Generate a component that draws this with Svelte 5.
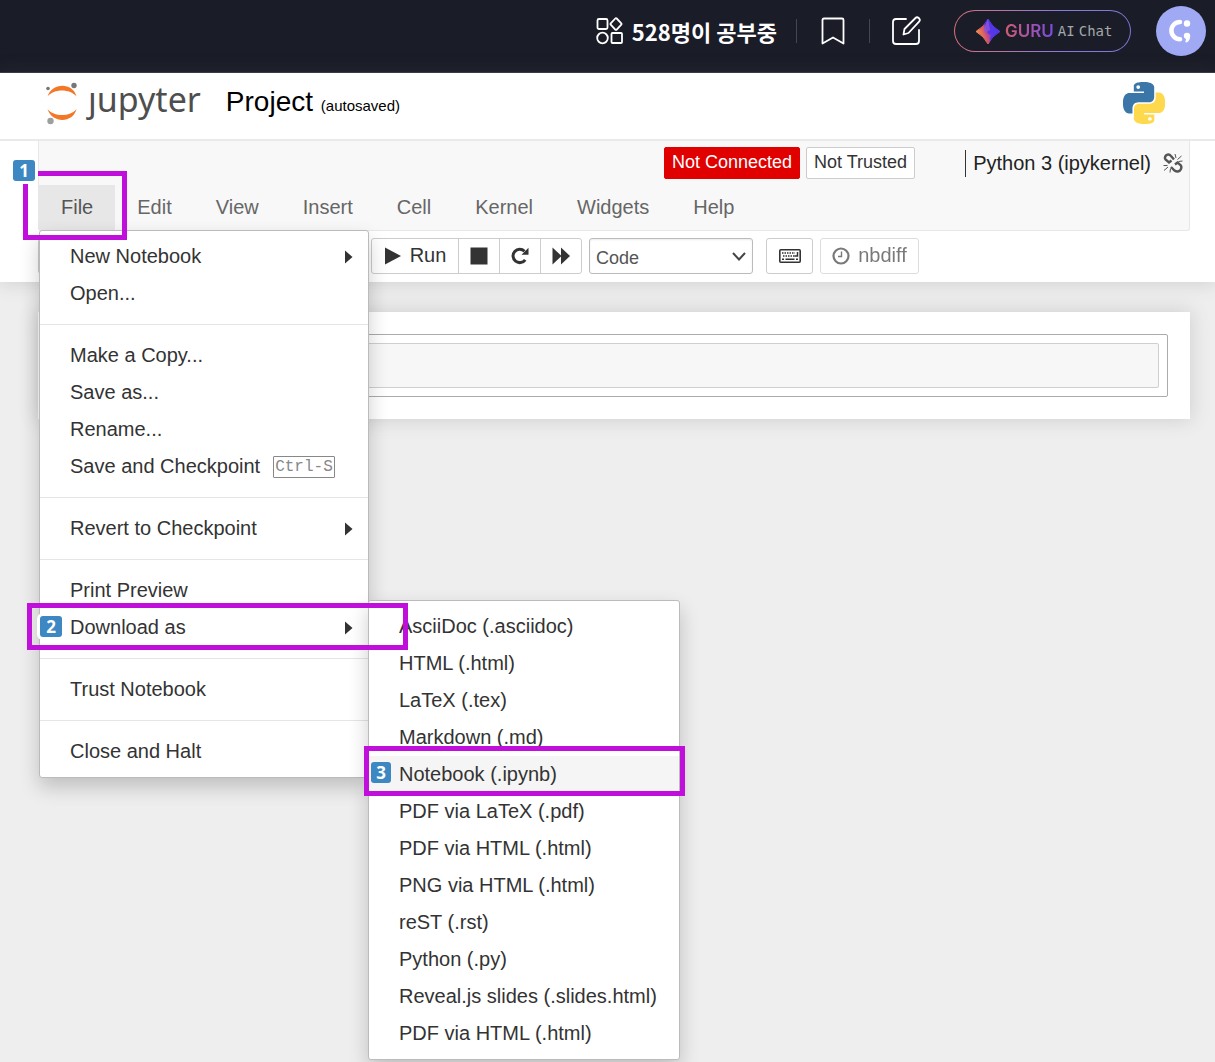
<script>
  let cellType = 'Code';
  let source = '';

  const menus = ['File', 'Edit', 'View', 'Insert', 'Cell', 'Kernel', 'Widgets', 'Help'];

  const fileMenu = [
    [{ label: 'New Notebook', sub: true }, { label: 'Open...' }],
    [
      { label: 'Make a Copy...' },
      { label: 'Save as...' },
      { label: 'Rename...' },
      { label: 'Save and Checkpoint', key: 'Ctrl-S' }
    ],
    [{ label: 'Revert to Checkpoint', sub: true }],
    [{ label: 'Print Preview' }, { label: 'Download as', sub: true, step: 2 }],
    [{ label: 'Trust Notebook' }],
    [{ label: 'Close and Halt' }]
  ];

  const formats = [
    'AsciiDoc (.asciidoc)',
    'HTML (.html)',
    'LaTeX (.tex)',
    'Markdown (.md)',
    'Notebook (.ipynb)',
    'PDF via LaTeX (.pdf)',
    'PDF via HTML (.html)',
    'PNG via HTML (.html)',
    'reST (.rst)',
    'Python (.py)',
    'Reveal.js slides (.slides.html)',
    'PDF via HTML (.html)'
  ];

  // edit buttons, icons on a 20x20 grid
  const editGroups = [
    [{ name: 'Save', d: 'M3 3h11l3 3v11H3zM6 3v5h7V3M6 17v-6h8v6' }],
    [{ name: 'Insert cell below', d: 'M10 3v14M3 10h14' }],
    [
      { name: 'Cut', d: 'M4 4l11 11M4 16L15 5' },
      { name: 'Copy', d: 'M3 3h9v9H3zM8 12v5h9V8h-5' },
      { name: 'Paste', d: 'M4 4h12v13H4zM8 2h4v4H8z' }
    ],
    [
      { name: 'Move up', d: 'M10 17V3M4 9l6-6 6 6' },
      { name: 'Move down', d: 'M10 3v14M4 11l6 6 6-6' }
    ]
  ];
</script>

<div class="page">
  <header class="topbar">
    <a class="studying" href="#members">
      <svg width="28" height="28" viewBox="0 0 28 28" fill="none" stroke="#fff" stroke-width="1.8">
        <rect x="1.5" y="2" width="10" height="10" rx="1.5" />
        <path d="M20 1.2a1 1 0 0 1 .7.3l4.6 4.8a1 1 0 0 1 0 1.4l-4.6 4.8a1 1 0 0 1-1.4 0L14.700 7.700a1 1 0 0 1 0-1.400L19.300 1.500a1 1 0 0 1 .7-.3z" />
        <circle cx="6.5" cy="21" r="5.3" />
        <rect x="15.5" y="16" width="10.5" height="10" rx="1" />
      </svg>
      <span>528명이 공부중</span>
    </a>
    <span class="sep"></span>
    <button class="plain bookmark" aria-label="Bookmark">
      <svg width="24" height="28" viewBox="0 0 24 28" fill="none" stroke="#fff" stroke-width="1.8" stroke-linejoin="round">
        <path d="M3 1.5h18q1.5 0 1.5 1.5v23.5L12 20.5 1.5 26.5V3Q1.5 1.5 3 1.5z" />
      </svg>
    </button>
    <span class="sep"></span>
    <button class="plain write" aria-label="Write">
      <svg width="29" height="30" viewBox="0 0 29 30" fill="none" stroke="#fff" stroke-width="1.8" stroke-linejoin="round" stroke-linecap="round">
        <path d="M14 3H4Q1 3 1 6v19q0 3 3 3h20q3 0 3-3V14" />
        <path d="M11.5 18.5l1-5.5L23.5 2q1.500-1.500 3.200 0l.4.4q1.500 1.700 0 3.200L16.500 17z" />
      </svg>
    </button>
    <a class="guru" href="#chat">
      <svg width="26" height="27" viewBox="0 0 26 27">
        <defs>
          <linearGradient id="spark" x1="0" y1="0.7" x2="1" y2="0.3">
            <stop offset="0.1" stop-color="#f58a4c" />
            <stop offset="0.4" stop-color="#d0526e" />
            <stop offset="0.5" stop-color="#5b35e8" />
            <stop offset="1" stop-color="#4a3ae8" />
          </linearGradient>
        </defs>
        <path d="M13 1Q17 9 25 13.5Q17 18 13 26Q9 18 1 13.5Q9 9 13 1z" fill="url(#spark)" stroke="url(#spark)" stroke-linejoin="round" />
        <path d="M13 1L9 10l1 5 5-3z" fill="#8a55d8" opacity=".8" />
        <path d="M13 26L10 14l6 3z" fill="#c04f8a" opacity=".6" />
      </svg>
      <b>GURU</b>
      <span>AI</span>
      <span>Chat</span>
    </a>
    <a class="avatar" href="#profile" aria-label="Profile">
      <svg width="50" height="50" viewBox="0 0 50 50">
        <circle cx="25" cy="25" r="25" fill="#a0aaf4" />
        <path d="M24 16a8.600 8.600 0 0 0 0 17.200" fill="none" stroke="#fff" stroke-width="4.5" stroke-linecap="round" />
        <circle cx="31" cy="17.500" r="3.200" fill="#fff" />
        <path d="M27.800 30a3.200 3.200 0 0 1 6.400 0c0 3-1.500 6-4 6.500-.8 0-1-.6-.7-1.200l.6-2.200A3.200 3.200 0 0 1 27.800 30z" fill="#fff" />
      </svg>
    </a>
  </header>

  <div class="notebook-header">
    <div class="title-row">
      <a class="logo" href="#home">
        <svg width="34" height="44" viewBox="0 0 34 44">
          <path d="M2.500 15.500C7 1 28 1 31.500 15.500C25 7.500 9 7.500 2.500 15.500z" fill="#f37726" />
          <path d="M2.500 28C7 42.500 28 42.500 31.500 28C25 36 9 36 2.500 28z" fill="#f37726" />
          <circle cx="3" cy="7.500" r="1.800" fill="#767677" />
          <circle cx="29" cy="4.500" r="2.700" fill="#767677" />
          <circle cx="5.500" cy="40" r="3.200" fill="#9e9e9e" />
        </svg>
        <span>ȷupyter</span>
      </a>
      <h1>Project <small>(autosaved)</small></h1>
      <svg class="python" width="42" height="42" viewBox="0 0 24 24">
        <path fill="#3a76a8" d="M14.25.18l.9.2.73.26.59.3.45.32.34.34.25.34.16.33.1.3.04.26.02.2-.01.13V8.5l-.05.63-.13.55-.21.46-.26.38-.3.31-.33.25-.35.19-.35.14-.33.1-.3.07-.26.04-.21.02H8.77l-.69.05-.59.14-.5.22-.41.27-.33.32-.27.35-.2.36-.15.37-.1.35-.07.32-.04.27-.02.21v3.06H3.17l-.21-.03-.28-.07-.32-.12-.35-.18-.36-.26-.36-.36-.35-.46-.32-.59-.28-.73-.21-.88-.14-1.05-.05-1.23.06-1.22.16-1.04.24-.87.32-.71.36-.57.4-.44.42-.33.42-.24.4-.16.36-.1.32-.05.24-.01h.16l.06.01h8.16v-.83H6.18l-.01-2.75-.02-.37.05-.34.11-.31.17-.28.25-.26.31-.23.38-.2.44-.18.51-.15.58-.12.64-.1.71-.06.77-.04.84-.02 1.27.05zm-6.3 1.98l-.23.33-.08.41.08.41.23.34.33.22.41.09.41-.09.33-.22.23-.34.08-.41-.08-.41-.23-.33-.33-.22-.41-.09-.41.09z" />
        <path fill="#ffd94d" d="M21.1 6.11l.28.06.32.12.35.18.36.27.36.35.35.47.32.59.28.73.21.88.14 1.04.05 1.23-.06 1.23-.16 1.04-.24.86-.32.71-.36.57-.4.45-.42.33-.42.24-.4.16-.36.09-.32.05-.24.02-.16-.01h-8.22v.82h5.84l.01 2.76.02.36-.05.34-.11.31-.17.29-.25.25-.31.24-.38.2-.44.17-.51.15-.58.13-.64.09-.71.07-.77.04-.84.01-1.27-.04-1.07-.14-.9-.2-.73-.25-.59-.3-.45-.33-.34-.34-.25-.34-.16-.33-.1-.3-.04-.25-.02-.2.01-.13v-5.34l.05-.64.13-.54.21-.46.26-.38.3-.32.33-.24.35-.2.35-.14.33-.1.3-.06.26-.04.21-.02.13-.01h5.84l.69-.05.59-.14.5-.21.41-.28.33-.32.27-.35.2-.36.15-.36.1-.35.07-.32.04-.28.02-.21V6.07h2.09l.14.01zm-6.47 14.25l-.23.33-.08.41.08.41.23.33.33.23.41.08.41-.08.33-.23.23-.33.08-.41-.08-.41-.23-.33-.33-.23-.41-.08-.41.08z" />
      </svg>
    </div>

    <div class="container">
      <div class="menubar">
        <div class="status">
          <span class="notice danger">Not Connected</span>
          <button class="notice">Not Trusted</button>
          <span class="kernel">Python 3 (ipykernel)</span>
          <svg width="20" height="20" viewBox="0 0 20 20" fill="none" stroke="#555">
            <path d="M8.500 7.500L6 9.500L2.500 6.500Q1 4 3.500 2Q6 .500 8 3L11 6.500M8 14L11.500 17.500Q14.500 19.500 17 17.500Q19.500 14.500 17.500 12L14.500 9.500L12 11.500" stroke-width="2.4" />
            <path d="M12 1l1 4M18.500 3l-4 3.500M19.500 8l-4 .5M.5 12.500h4M1 17.500l4-3.500M7 19.500l.5-4" stroke-width="1" />
          </svg>
        </div>

        <ul class="nav">
          {#each menus as menu, i}
            <li class:open={i === 0}>
              <a href="#{menu}">{menu}</a>
              {#if i === 0}
                <div class="dropdown">
                  {#each fileMenu as section}
                    <ul>
                      {#each section as item}
                        <li>
                          <a href="#file">
                            {item.label}
                            {#if item.key}<kbd>{item.key}</kbd>{/if}
                            {#if item.sub}
                              <svg class="caret" width="8" height="14" viewBox="0 0 8 14"><path d="M0 .5L7.500 7L0 13.500z" /></svg>
                            {/if}
                          </a>
                          {#if item.step}
                            <ul class="submenu">
                              {#each formats as format, n}
                                <li class:active={n === 4}>
                                  <a href="#download">{format}</a>
                                  {#if n === 4}
                                    <span class="mark mark-3"></span>
                                    <span class="step step-3">3</span>
                                  {/if}
                                </li>
                              {/each}
                            </ul>
                            <span class="mark mark-2"></span>
                            <span class="step step-2">{item.step}</span>
                          {/if}
                        </li>
                      {/each}
                    </ul>
                  {/each}
                </div>
                <span class="mark mark-1"></span>
                <span class="step step-1">1</span>
              {/if}
            </li>
          {/each}
        </ul>
      </div>

      <div class="toolbar">
        {#each editGroups as group}
          <div class="group">
            {#each group as b}
              <button class="btn edit" aria-label={b.name}>
                <svg width="20" height="20" viewBox="0 0 20 20" fill="none" stroke="#333" stroke-width="2"><path d={b.d} /></svg>
              </button>
            {/each}
          </div>
        {/each}
        <div class="group">
          <button class="btn run">
            <svg width="18" height="18" viewBox="0 0 18 18"><path d="M1 .5L17 9L1 17.500z" /></svg>
            Run
          </button>
          <button class="btn" aria-label="Interrupt">
            <svg width="18" height="18" viewBox="0 0 18 18"><path d="M.5.5h17v17H.5z" /></svg>
          </button>
          <button class="btn" aria-label="Restart">
            <svg width="18" height="18" viewBox="0 0 18 18">
              <path d="M14.200 12.800A6.700 6.700 0 1 1 13.500 4.200" fill="none" stroke="#333" stroke-width="3" />
              <path d="M17.500.8v7h-7z" />
            </svg>
          </button>
          <button class="btn" aria-label="Restart and run all">
            <svg width="18" height="18" viewBox="0 0 18 18"><path d="M.5.5L9 8.500V.5L18 9L9 17.500V9.500L.5 17.500z" /></svg>
          </button>
        </div>
        <div class="select">
          <select bind:value={cellType} aria-label="Cell type">
            <option>Code</option>
            <option>Markdown</option>
            <option>Raw NBConvert</option>
            <option>Heading</option>
          </select>
          <svg width="14" height="9" viewBox="0 0 14 9" fill="none" stroke="#444" stroke-width="2"><path d="M1 1l6 6.500L13 1" /></svg>
        </div>
        <button class="btn palette" aria-label="Command palette">
          <svg width="22" height="14" viewBox="0 0 22 14" fill="none" stroke="#333">
            <rect x=".8" y=".8" width="20.4" height="12.4" rx="1" stroke-width="1.6" />
            <path d="M3 4h13M4 7h12" stroke-width="1.5" stroke-dasharray="1.5 1" />
            <path d="M3 10.300h2M6.500 10.300h9M17 10.300h2M15.500 7h3V3" stroke-width="1.5" />
          </svg>
        </button>
        <button class="btn nbdiff" disabled>
          <svg width="18" height="18" viewBox="0 0 18 18" fill="none" stroke="#333">
            <circle cx="9" cy="9" r="7.5" stroke-width="2.2" />
            <path d="M9.500 4.500v5H6" stroke-width="1.4" />
          </svg>
          nbdiff
        </button>
      </div>
    </div>
  </div>

  <main>
    <div class="cell">
      <textarea rows="1" aria-label="Cell source" bind:value={source}></textarea>
    </div>
  </main>
</div>

<style>
  :global(body) {
    margin: 0;
    background: #eee;
    font-family: "Liberation Sans", Arial, sans-serif;
    font-size: 20px;
    color: #333;
  }
  .page {
    display: flow-root;
    min-height: 100vh;
  }
  ul {
    list-style: none;
    margin: 0;
    padding: 0;
  }
  a {
    color: inherit;
    text-decoration: none;
  }
  svg {
    display: block;
    flex: none;
  }
  button, select, textarea {
    font-family: inherit;
    color: inherit;
    box-sizing: border-box;
  }

  /* site bar */
  .topbar {
    display: flex;
    align-items: center;
    justify-content: flex-end;
    padding: 6px 9px 16px;
    background: #1a1c28;
    border-bottom: 1px solid #3b3947;
    color: #fff;
  }
  .studying {
    display: flex;
    align-items: center;
    gap: 8px;
    margin-right: 19px;
    font: bold 22px/32px "Noto Sans CJK KR", sans-serif;
  }
  .sep {
    width: 1px;
    height: 24px;
    background: #454650;
  }
  .plain {
    padding: 0;
    border: none;
    background: none;
  }
  .bookmark {
    margin: 0 24px;
  }
  .write {
    margin: 0 33px 0 22px;
  }
  .guru {
    display: flex;
    align-items: center;
    gap: 4px;
    box-sizing: border-box;
    width: 177px;
    height: 42px;
    padding: 0 20px;
    margin-right: 25px;
    border: 1px solid transparent;
    border-radius: 21px;
    background: linear-gradient(#1a1c28, #1a1c28) padding-box,
      linear-gradient(90deg, #d9737d, #8a79dc 60%, #8376d8) border-box;
  }
  .guru b {
    font: 600 17px/24px Inter, sans-serif;
    background: linear-gradient(90deg, #cf5c74, #7a4be0);
    -webkit-background-clip: text;
    background-clip: text;
    color: transparent;
  }
  .guru span {
    font: 14px/24px "DejaVu Sans Mono", monospace;
    color: #a3a8a8;
  }

  /* notebook header */
  .notebook-header {
    position: relative;
    z-index: 2;
    background: #fff;
    box-shadow: 0 0 18px 1px rgba(87, 87, 87, 0.2);
  }
  .title-row {
    display: flex;
    align-items: center;
    height: 66px;
    padding: 0 50px 0 45px;
    border-bottom: 2px solid #e9e9e9;
  }
  .logo {
    display: flex;
    align-items: center;
    gap: 9px;
    padding-bottom: 6px;
    font: 34px/44px "Noto Sans", sans-serif;
    color: #4e4e4e;
  }
  .logo span {
    padding-bottom: 8px;
  }
  h1 {
    margin: 0 auto 5px 25px;
    font-size: 28px;
    font-weight: normal;
    line-height: 32px;
    color: #000;
  }
  h1 small {
    font-size: 15px;
  }
  .python {
    margin-bottom: 6px;
  }
  .container {
    padding: 0 25px 0 38px;
  }
  .menubar {
    background: #f8f8f8;
    border: 1px solid #e7e7e7;
    border-top: none;
    border-radius: 0 0 3px 3px;
  }
  .status {
    display: flex;
    align-items: center;
    justify-content: flex-end;
    height: 44px;
    padding-right: 6px;
  }
  .notice {
    height: 32px;
    margin: 0 6px 0 0;
    padding: 0 7px 2px;
    box-sizing: border-box;
    border: 1px solid #ccc;
    border-radius: 2px;
    background: #fff;
    font-size: 18px;
    line-height: 28px;
  }
  .danger {
    background: #e00000;
    border-color: #e00000;
    color: #fff;
  }
  .kernel {
    margin: 0 12px 0 44px;
    padding-left: 7px;
    border-left: 1px solid #333;
    line-height: 27px;
    color: #222;
  }
  .nav {
    display: flex;
  }
  .nav > li {
    position: relative;
  }
  .nav > li > a {
    display: block;
    padding: 0 22px;
    line-height: 45px;
    color: #666;
  }
  .nav > .open > a {
    background: #e7e7e7;
    color: #555;
  }

  .dropdown, .submenu {
    position: absolute;
    z-index: 3;
    box-sizing: border-box;
    padding: 7px 0;
    background: #fff;
    border: 1px solid #bbb;
    border-radius: 3px;
    box-shadow: 0 9px 20px rgba(0, 0, 0, 0.2);
  }
  .dropdown {
    top: 100%;
    left: 0;
    width: 330px;
  }
  .submenu {
    top: -9px;
    left: 100%;
    width: 312px;
  }
  .dropdown > ul + ul {
    margin-top: 12px;
    padding-top: 12px;
    border-top: 1px solid #e5e5e5;
  }
  .dropdown li {
    position: relative;
  }
  .dropdown a {
    display: flex;
    align-items: center;
    height: 37px;
    padding: 0 15px 0 30px;
    white-space: nowrap;
  }
  .active {
    background: #f5f5f5;
  }
  .caret {
    margin-left: auto;
    fill: #333;
  }
  kbd {
    margin-left: 13px;
    padding: 0 1px;
    border: 1px solid #888;
    border-radius: 1px;
    font: 16px/20px "Liberation Mono", monospace;
    color: #888;
  }

  /* numbered walkthrough */
  .mark {
    position: absolute;
    z-index: 4;
    box-sizing: border-box;
    border: 5px solid #c10fdb;
    pointer-events: none;
  }
  .mark-1 {
    top: -14px;
    left: -16px;
    width: 104px;
    height: 69px;
  }
  .mark-2 {
    top: -6px;
    left: -13px;
    width: 381px;
    height: 47px;
  }
  .mark-3 {
    top: -10px;
    left: -5px;
    width: 321px;
    height: 50px;
  }
  .step {
    position: absolute;
    z-index: 5;
    width: 22px;
    border-radius: 3px;
    background: #3d87c3;
    box-shadow: 0 0 0 3px #fff;
    color: #fff;
    font: bold 17px/21px "Noto Sans", sans-serif;
    text-align: center;
  }
  .step-1 {
    top: -25px;
    left: -26px;
  }
  .step-2 {
    top: 7px;
    left: 0;
  }
  .step-3 {
    top: 6px;
    left: 2px;
    width: 20px;
    box-shadow: none;
  }

  /* toolbar */
  .toolbar {
    display: flex;
    gap: 7px;
    padding: 7px 0 8px;
  }
  .group {
    display: flex;
  }
  .btn {
    display: flex;
    align-items: center;
    justify-content: center;
    gap: 8px;
    width: 42px;
    height: 36px;
    margin: 0;
    padding: 0 0 1px;
    border: 1px solid #ccc;
    border-radius: 3px;
    background: #fff;
    font-size: 20px;
    fill: #333;
  }
  .btn + .btn {
    margin-left: -1px;
  }
  .group .btn:not(:last-child) {
    border-top-right-radius: 0;
    border-bottom-right-radius: 0;
  }
  .group .btn:not(:first-child) {
    border-top-left-radius: 0;
    border-bottom-left-radius: 0;
  }
  .edit {
    width: 44px;
  }
  .run {
    width: 88px;
  }
  .select {
    position: relative;
  }
  select {
    width: 164px;
    height: 36px;
    padding: 3px 6px 0;
    border: 1px solid #bbb;
    border-radius: 3px;
    background: #fff;
    box-shadow: inset 0 1px 2px rgba(0, 0, 0, 0.08);
    color: #555;
    font-size: 18px;
    appearance: none;
  }
  .select svg {
    position: absolute;
    top: 14px;
    right: 7px;
    pointer-events: none;
  }
  .btn.palette {
    width: 47px;
    margin-left: 6px;
  }
  .btn.nbdiff {
    width: 99px;
    margin-left: 0;
    opacity: 0.65;
  }

  main {
    margin: 30px 25px 0 38px;
    padding: 22px;
    background: #fff;
    box-shadow: 0 0 18px 1px rgba(87, 87, 87, 0.2);
  }
  .cell {
    padding: 8px;
    border: 1px solid #ababab;
    border-radius: 2px;
  }
  textarea {
    display: block;
    width: 100%;
    height: 45px;
    border: 1px solid #cfcfcf;
    border-radius: 2px;
    background: #f7f7f7;
    resize: none;
  }
</style>
